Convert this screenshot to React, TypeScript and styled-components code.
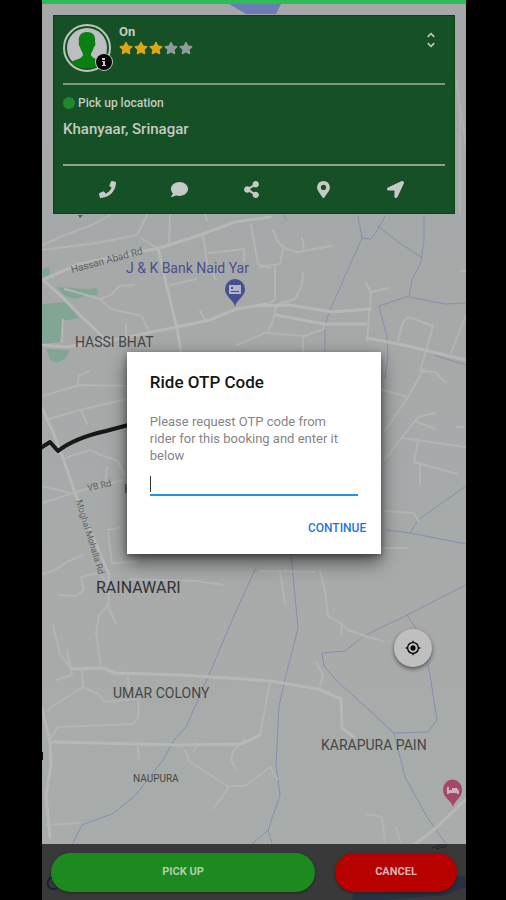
import React, { useState } from "react";
import styled, { createGlobalStyle } from "styled-components";
import { FaPhone, FaComment, FaShareAlt, FaMapMarkerAlt, FaLocationArrow, FaStar } from "react-icons/fa";
import { MdMyLocation, MdUnfoldMore } from "react-icons/md";

const Global = createGlobalStyle`
  * { box-sizing: border-box; }
  body { margin: 0; background: #000; font-family: Roboto, "Liberation Sans", sans-serif; }
  button { font-family: inherit; border: 0; padding: 0; background: none; cursor: pointer; }
`;

const Page = styled.div`
  display: flex;
  min-height: 100vh;
  padding: 0 40px 0 42px;
`;

const Phone = styled.main`
  position: relative;
  flex: 1;
  min-width: 0;
  display: flex;
  flex-direction: column;
  border-top: 4px solid #2fbb55;
  background: #a6a9a8;
  overflow: hidden;
`;

const MapLayer = styled.svg`
  position: absolute;
  inset: -4px 0 0;
  width: 100%;
  height: calc(100% + 4px);
`;

const Card = styled.section`
  position: relative;
  margin: 11px 11px 0;
  padding: 0 9px;
  background: #155026;
  border: 1px solid #06460f;
  color: #c5cbc2;
`;

const Profile = styled.header`
  display: flex;
  align-items: flex-start;
  gap: 8px;
  height: 69px;
  padding: 8px 4px 0 0;
  border-bottom: 2px solid #7c9c76;
`;

const Avatar = styled.svg`
  width: 50px;
  height: 48px;
  margin-right: -2px;
`;

const Who = styled.div`
  flex: 1;
`;

const Name = styled.h2`
  margin: 0;
  font-size: 13px;
  line-height: 16px;
  font-weight: 700;
`;

const Stars = styled.div`
  display: flex;
  gap: 1px;
  padding-top: 1px;
`;

const Star = styled(FaStar)<{ $on: boolean }>`
  width: 14px;
  height: 14px;
  color: ${(p) => (p.$on ? "#dda51c" : "#8e9b96")};
`;

const Toggle = styled.button`
  display: flex;
  margin-top: 6px;
  color: inherit;
  font-size: 20px;
`;

const Trip = styled.div`
  height: 81px;
  padding-top: 10px;
  border-bottom: 2px solid #8fa28d;
`;

const Label = styled.div`
  display: flex;
  align-items: center;
  gap: 3px;
  font-size: 12px;
  line-height: 16px;
  font-weight: 500;
`;

const Dot = styled.span`
  width: 12px;
  height: 12px;
  border-radius: 50%;
  background: #1e8a2d;
`;

const Place = styled.div`
  margin-top: 8px;
  font-size: 15px;
  line-height: 20px;
  font-weight: 500;
`;

const Actions = styled.nav`
  display: grid;
  grid-template-columns: repeat(5, 1fr);
  height: 47px;
  padding: 0 13px 0 8px;
`;

const Action = styled.button`
  display: flex;
  align-items: center;
  justify-content: center;
  color: #c6cac6;
  font-size: 17px;
`;

const Locate = styled.button`
  position: relative;
  display: flex;
  align-items: center;
  justify-content: center;
  align-self: flex-end;
  width: 38px;
  height: 38px;
  margin: auto 34px 177px 0;
  border-radius: 50%;
  background: #bfbfbf;
  color: #080808;
  font-size: 16px;
  box-shadow: 0 2px 4px rgba(0, 0, 0, 0.5);
`;

const BottomBar = styled.footer`
  position: relative;
  display: flex;
  gap: 20px;
  padding: 9px 9px 8px;
  overflow: hidden;
  background: #393939;
`;

const River = styled.svg`
  position: absolute;
  inset: 0;
  width: 100%;
  height: 100%;
`;

const Pill = styled.button<{ $danger?: boolean }>`
  position: relative;
  flex: ${(p) => (p.$danger ? "0 0 122px" : "1")};
  height: 39px;
  padding-bottom: 2px;
  border-radius: 20px;
  background: ${(p) => (p.$danger ? "#b70000" : "#1d8a20")};
  color: ${(p) => (p.$danger ? "#d3b5b5" : "#b3cdb0")};
  font-size: 11px;
  font-weight: 700;
  box-shadow: 0 1px 3px rgba(0, 0, 0, 0.4);
`;

const Overlay = styled.div`
  position: absolute;
  inset: -4px 0 0;
  display: flex;
  align-items: center;
  justify-content: center;
  padding-top: 5px;
`;

const Dialog = styled.form`
  display: flex;
  flex-direction: column;
  width: 60%;
  min-width: 253px;
  max-width: 360px;
  padding: 20px 23px 18px;
  background: #fff;
  box-shadow: 0 8px 18px rgba(0, 0, 0, 0.55), 0 2px 6px rgba(0, 0, 0, 0.35);
`;

const Title = styled.h1`
  margin: 0;
  font-size: 17px;
  line-height: 20px;
  font-weight: 500;
  color: #161616;
`;

const Message = styled.label`
  margin-top: 21px;
  padding-right: 8px;
  font-size: 13px;
  line-height: 17px;
  color: #858585;
`;

const Field = styled.div`
  position: relative;
`;

const Code = styled.input`
  display: block;
  width: 100%;
  height: 28px;
  margin-top: 4px;
  padding: 0;
  border: 0;
  border-bottom: 2px solid #2196d6;
  border-radius: 0;
  outline: 0;
  background: none;
  font: 16px Roboto, sans-serif;
  caret-color: transparent;
`;

const Caret = styled.span`
  position: absolute;
  left: 0;
  bottom: 4px;
  width: 1px;
  height: 16px;
  background: #333;
`;

const Continue = styled.button`
  align-self: flex-end;
  margin: 24px -8px 0 0;
  font-size: 12px;
  line-height: 16px;
  color: #2675df;
  font-weight: 500;
`;

const parks = [
  "M42 269L49 267L51 277L42 279Z",
  "M57 287L88 289L97 288L98 295L88 295L75 299L65 296Z",
  "M42 304L65 302L79 318L62 321L60 342L42 344Z",
  "M46 349L70 350L65 359L57 363L50 360Z",
];

const mainRoads = [
  "M42 280L79 264L160 248L200 235L235 222L270 217",
  "M42 279L60 295L82 317L108 342",
  "M42 345L66 347L108 341L172 328L210 320L236 309L266 304",
  "M158 248L166 283L177 328L181 351",
  "M260 306L290 305L332 312L370 309",
  "M276 315L324 324L366 324",
  "M367 338L408 346L466 360",
  "M42 408L53 432L63 458L76 496L92 535L109 574L108 594",
  "M71 669L103 668L115 673L180 675L243 679L270 681L318 689L341 699L342 728L354 737",
  "M42 708L50 742L51 765L46 795L50 838",
  "M53 742L180 745L242 744L260 735",
  "M410 848L436 828L466 799",
];

const roads = [
  "M42 245L65 235L92 225L110 215", "M42 250L97 243L137 235L147 215", "M141 238L157 248",
  "M169 244L170 214", "M203 235L207 263L216 280", "M207 221L205 214",
  "M209 253L244 249L244 261", "M251 225L258 264L270 268", "M170 285L196 279",
  "M65 289L100 299L111 295L119 286L134 285", "M100 299L111 309L142 316L148 330",
  "M200 311L205 320", "M62 342L63 320", "M126 325L126 339", "M237 345L265 333",
  "M273 230L278 242L286 249L297 252L331 246", "M302 238L304 249", "M283 249L280 264L260 267M275 267L275 299L267 306",
  "M303 272L302 285L295 299L275 305", "M276 306L273 321L267 333L304 336L324 329L324 323M303 337L303 351",
  "M366 283L371 293L367 341M372 292L388 288", "M398 341L403 322L408 317L433 326L424 358L420 371",
  "M466 315L451 353", "M42 396L80 385L127 386M77 387L79 376L89 371",
  "M46 420L80 410L127 399", "M81 410L87 424", "M62 459L90 450L101 455L118 461L124 475",
  "M42 486L70 493M42 503L79 491L124 480", "M105 484L107 467", "M108 533L112 563L136 562M108 530L119 528",
  "M54 570L67 562L83 555", "M42 574L55 570M59 595L76 596L84 590L81 577L98 573L107 582L109 603L99 616L96 633L101 668",
  "M107 604L116 624", "M130 579L195 581L224 585", "M53 625L60 654L71 668M67 650L72 675L57 680",
  "M82 671L83 687L50 708L48 712", "M83 687L98 694L104 702L137 699", "M128 677L129 695",
  "M139 700L138 718L133 724L58 727L50 739", "M138 747L139 760",
  "M270 682L260 735M245 739L234 750L231 759L236 770", "M185 750L190 762L212 776L227 786L245 786L261 774L270 767L277 779",
  "M194 752L196 743", "M229 787L213 809", "M280 571L285 604M320 571L325 590L328 616L342 624L348 630L368 637L383 641",
  "M342 624L341 634M317 663L323 676L319 690", "M380 389L408 397M424 369L408 397L384 432",
  "M420 371L435 372L446 383", "M385 459L418 417L435 413M415 421L435 429",
  "M402 438L466 447M418 441L414 462L457 474M420 463L420 484", "M384 511L414 513L419 522",
  "M382 548L408 548", "M366 814L382 817L385 842M396 828L401 843", "M46 825L80 823", "M457 427L464 427",
  "M461 271L466 271", "M260 571L315 572",
];

const streams = [
  "M358 216L362 238L371 239L378 229L385 216", "M362 238L330 310L325 325L325 351",
  "M378 226L398 242L421 257", "M424 216L424 240L421 262L412 280L409 296L379 306L387 337L388 355",
  "M409 297L445 304L466 303", "M388 355L385 378", "M434 355L466 365",
  "M466 486L418 520L410 533L386 530M410 533L466 544",
  "M291 554L298 628L286 675L279 706L276 765L280 795L268 830L272 843",
  "M268 830L252 844", "M256 568L236 611L208 677L186 727L174 740L163 760L135 796L112 814L82 825L73 843",
  "M466 585L407 615L364 636L345 651L322 653L324 666L338 682L368 709L394 733L405 777L427 817L446 844",
  "M407 615L423 639L430 675L437 720L428 732L394 733", "M283 214L286 220",
];

const Map = () => (
  <MapLayer viewBox="42 0 424 900" preserveAspectRatio="xMidYMid slice" role="img" aria-label="Map of Srinagar">
    <defs>
      <linearGradient id="ground" x1="0" y1="0" x2="0" y2="1">
        <stop offset="0" stopColor="#a5a7a8" />
        <stop offset="1" stopColor="#a8acaa" />
      </linearGradient>
    </defs>
    <rect x="0" y="0" width="520" height="900" fill="url(#ground)" />
    <path d="M229 4H281L276 14H246Z" fill="#6b7db4" />
    {parks.map((d) => <path key={d} d={d} fill="#81a694" />)}
    <g fill="none" strokeLinejoin="round" strokeLinecap="round">
      {streams.map((d) => <path key={d} d={d} stroke="#858fb0" strokeWidth="1" />)}
      {roads.map((d) => <path key={d} d={d} stroke="#b2b5b4" strokeWidth="2" />)}
      {mainRoads.map((d) => <path key={d} d={d} stroke="#b5b8b6" strokeWidth="3" />)}
      <path d="M460 110V214M456 80L462 120L466 145" stroke="#aeb0b1" strokeWidth="2" />
      <path d="M39 449L50 442L58 451C72 440 88 435 106 431L132 424" stroke="#181818" strokeWidth="4" />
    </g>
    <g fill="#454747" fontFamily="Roboto, sans-serif">
      <text x="126" y="273" fontSize="14" fill="#4b4f8c">J &amp; K Bank Naid Yar</text>
      <text x="75" y="347" fontSize="14">HASSI BHAT</text>
      <text x="96" y="593" fontSize="16" fill="#333">RAINAWARI</text>
      <text x="113" y="698" fontSize="14">UMAR COLONY</text>
      <text x="321" y="750" fontSize="14">KARAPURA PAIN</text>
      <text x="133" y="782" fontSize="10">NAUPURA</text>
      <text x="124" y="493" fontSize="13">H</text>
      <text fontSize="10" fill="#606262" transform="translate(72 273) rotate(-15)">Hassan Abad Rd</text>
      <text fontSize="9" fill="#606262" transform="translate(88 491) rotate(-12)">VB Rd</text>
      <text fontSize="9" fill="#606262" transform="translate(76 501) rotate(73)">Moghal Mohalla Rd</text>
    </g>
    <path d="M235 307C234 300 225 297 225 289A10 10 0 0 1 245 289C245 297 236 300 235 307Z" fill="#484f91" />
    <path d="M229 285H241V294H229ZM231 287V289H233V287ZM231 291V292H239V291Z" fill="#b1b5ca" fillRule="evenodd" />
    <path d="M453 807C452 801 443 798 443 790A9 10 0 0 1 462 790C462 798 454 801 453 807Z" fill="#a3476b" />
    <path d="M447 787H449V790H452V788H457L459 791V794H457V793H449V794H447Z" fill="#d2adba" />
    <path d="M78 215H83L80 218Z" fill="#3d6063" />
    <path d="M40 752H43V760H40Z" fill="#111" />
  </MapLayer>
);

const actions = [
  { label: "Call rider", Icon: FaPhone },
  { label: "Message rider", Icon: FaComment },
  { label: "Share trip", Icon: FaShareAlt },
  { label: "Show location", Icon: FaMapMarkerAlt },
  { label: "Navigate", Icon: FaLocationArrow },
];

export default function App() {
  const [code, setCode] = useState("");
  return (
    <>
      <Global />
      <Page>
        <Phone>
          <Map />
          <Card>
            <Profile>
              <Avatar viewBox="0 0 50 48" role="img" aria-label="Rider photo">
                <circle cx="24" cy="24" r="23" fill="#155026" stroke="#b9c5b8" strokeWidth="2" />
                <circle cx="24" cy="24" r="20" fill="#bdbec2" />
                <path d="M24 8C30 8 33 12 32 18C33 19 32 23 31 23C30 27 28 28 28 31C29 35 36 35 40 38C34 46 14 46 8 38C13 35 19 35 20 31C20 28 18 27 17 23C16 22 15 19 16 18C15 12 18 8 24 8Z" fill="#0b8012" />
                <circle cx="41" cy="38" r="9" fill="#b9c5b8" />
                <circle cx="41" cy="38" r="8" fill="#050505" />
                <path d="M39 34H42V36H39ZM39 37H42V41H43V42H39V41H40V38H39Z" fill="#c8c8c8" />
              </Avatar>
              <Who>
                <Name>On</Name>
                <Stars role="img" aria-label="3 out of 5 stars">
                  {[1, 2, 3, 4, 5].map((n) => <Star key={n} $on={n <= 3} />)}
                </Stars>
              </Who>
              <Toggle aria-label="Collapse details"><MdUnfoldMore /></Toggle>
            </Profile>
            <Trip>
              <Label><Dot />Pick up location</Label>
              <Place>Khanyaar, Srinagar</Place>
            </Trip>
            <Actions>
              {actions.map(({ label, Icon }) => (
                <Action key={label} aria-label={label}><Icon /></Action>
              ))}
            </Actions>
          </Card>
          <Locate aria-label="My location"><MdMyLocation /></Locate>
          <BottomBar>
            <River viewBox="0 0 424 56" preserveAspectRatio="none" aria-hidden="true">
              <path d="M310 56L312 49L380 48L408 32H424V43L404 51L340 56Z" fill="#273140" />
              <path d="M390 4L402 0M394 5L405 2" stroke="#202020" strokeWidth="1" />
              <path d="M16 35A6 6 0 1 0 15 44M30 47H42" fill="none" stroke="#18203b" strokeWidth="2" />
            </River>
            <Pill>PICK UP</Pill>
            <Pill $danger>CANCEL</Pill>
          </BottomBar>
          <Overlay>
            <Dialog role="dialog" aria-labelledby="otp-title" onSubmit={(e) => e.preventDefault()}>
              <Title id="otp-title">Ride OTP Code</Title>
              <Message htmlFor="otp">Please request OTP code from rider for this booking and enter it below</Message>
              <Field>
                <Code id="otp" inputMode="numeric" value={code} onChange={(e) => setCode(e.target.value)} />
                {code === "" && <Caret />}
              </Field>
              <Continue type="submit">CONTINUE</Continue>
            </Dialog>
          </Overlay>
        </Phone>
      </Page>
    </>
  );
}
